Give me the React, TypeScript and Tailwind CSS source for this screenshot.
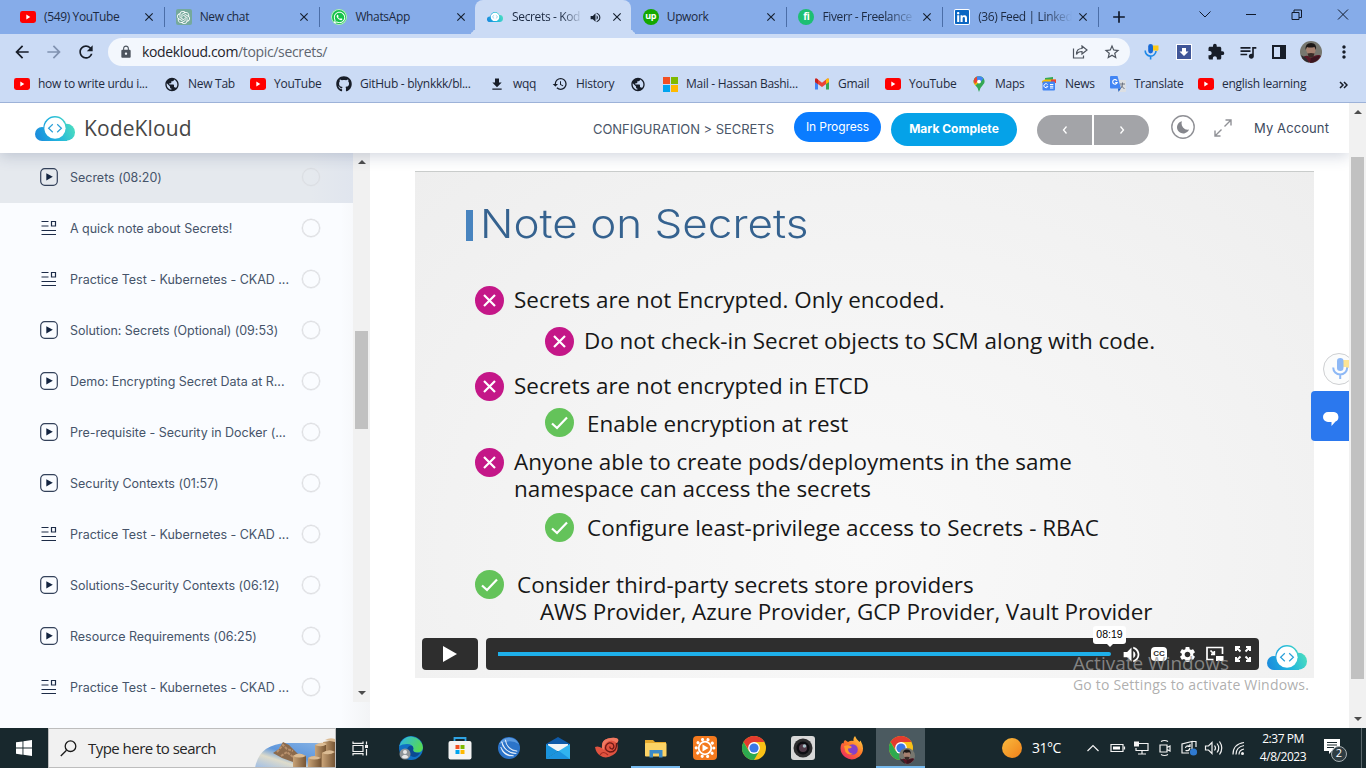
import React from "react";
import { FaYoutube, FaWhatsapp, FaGithub, FaLinkedin } from "react-icons/fa";
import { SiOpenai } from "react-icons/si";
import {
  MdArrowBack, MdArrowForward, MdRefresh, MdLock, MdStarBorder, MdExtension, MdQueueMusic, MdMoreVert,
  MdPublic, MdHistory, MdClose, MdVolumeUp, MdSettings, MdAdd, MdFileDownload,
} from "react-icons/md";

const ui = "font-['Open_Sans','Noto_Sans',sans-serif]";

function Cloud({ className, id }: { className: string; id: string }) {
  return (
    <svg viewBox="0 0 40 25" className={className}>
      <defs>
        <linearGradient id={id} gradientUnits="userSpaceOnUse" x1="0" y1="25" x2="40" y2="8">
          <stop offset="0" stopColor="#1b86dc" />
          <stop offset="0.5" stopColor="#20b4de" />
          <stop offset="1" stopColor="#4fe0bd" />
        </linearGradient>
      </defs>
      <g fill={`url(#${id})`}>
        <circle cx="20" cy="11.800" r="11.700" />
        <circle cx="7" cy="18" r="7" />
        <circle cx="31.500" cy="16.200" r="8.500" />
        <rect x="7" y="14" width="25" height="11" />
      </g>
      <circle cx="20" cy="12.200" r="10.600" fill="#fff" />
      <path d="M17.800 8.200L13.600 12.200L17.800 16.200M22.200 8.200L26.400 12.200L22.200 16.200" fill="none" stroke="#2a9fd8" strokeWidth="1.200" />
    </svg>
  );
}

function YT() {
  return (
    <svg viewBox="0 0 16 12" className="h-3 w-4">
      <rect width="16" height="12" rx="2.4" fill="#f00" />
      <path d="M6.3 3.6V8.4L10.3 6Z" fill="#fff" />
    </svg>
  );
}

function Face({ className }: { className: string }) {
  return (
    <svg viewBox="0 0 22 22" className={className}>
      <circle cx="11" cy="11" r="11" fill="#77776f" />
      <path d="M2 17Q5 14 8 15L14 15Q19 13 21 15A11 11 0 0 1 3 18Z" fill="#5a1826" />
      <path d="M6 9Q6 3 11 3Q16 3 15.500 10L13.500 15Q11 18 8.500 15Z" fill="#a5806f" />
      <path d="M5.500 9Q5 2 11 2Q17 2 16 9L14.500 6Q10 7 7 6Z" fill="#1c1817" />
      <path d="M7.500 12.500Q11 11.500 14.500 12.500L13.500 15.500Q11 18 8.500 15.500Z" fill="#3a2b27" />
      <path d="M1 14L6 17L9 21.500A11 11 0 0 1 1 14Z" fill="#2a2c30" />
      <path d="M11 17L20 14.500A11 11 0 0 1 10 22Z" fill="#3b1620" />
    </svg>
  );
}

function Mic() {
  return (
    <svg viewBox="0 0 16 16" className="size-4">
      <path d="M8 1.500H14.500V6L12.500 7.500V6.500H8Z" fill="#fbc918" />
      <rect x="4.200" y="0" width="4.800" height="9.500" rx="2.400" fill="#1668d6" />
      <path d="M1.200 6.500A5.400 5.400 0 0 0 12 7M6.600 12V15.500" fill="none" stroke="#1c88e8" strokeWidth="1.600" />
    </svg>
  );
}

type TabDef = { icon: React.ReactNode; text: string; sep?: boolean; active?: boolean; fade?: boolean };

const tabs: TabDef[] = [
  { icon: <YT />, text: "(549) YouTube", sep: true },
  { icon: <span className="flex size-4 items-center justify-center rounded-[2px] bg-[#75a99c] text-white"><SiOpenai size={13} /></span>, text: "New chat", sep: true },
  { icon: <span className="flex size-4 items-center justify-center rounded-full bg-[#16c24a] text-white ring-1 ring-white/70 ring-inset"><FaWhatsapp size={13} /></span>, text: "WhatsApp" },
  { icon: <Cloud id="tabcloud" className="h-[10px] w-4" />, text: "Secrets - Kod", active: true, fade: true },
  { icon: <span className="flex size-4 items-center justify-center rounded-full bg-[#14a800] pb-[2px] text-[9px] font-bold tracking-tight text-white">up</span>, text: "Upwork", sep: true },
  { icon: <span className="flex size-4 items-center justify-center rounded-full bg-[#1dbf73] pb-px text-[10px] font-bold tracking-tight text-white">fi</span>, text: "Fiverr - Freelance", sep: true, fade: true },
  { icon: <FaLinkedin size={16} color="#0a66c2" className="rounded-xs bg-white" />, text: "(36) Feed | Linked", sep: true, fade: true },
];

function Tab({ t }: { t: TabDef }) {
  const base = "relative flex h-[34px] w-[155.700px] shrink-0 items-center pl-3 pr-2 ";
  return (
    <div className={base + (t.active ? "rounded-t-lg bg-[#cbdbf5]" : "")}>
      {t.active && (
        <>
          <span className="absolute bottom-0 -left-2 size-2 rounded-br-lg shadow-[4px_4px_0_0_#cbdbf5] [clip-path:inset(0)]" />
          <span className="absolute -right-2 bottom-0 size-2 rounded-bl-lg shadow-[-4px_4px_0_0_#cbdbf5] [clip-path:inset(0)]" />
        </>
      )}
      <span className="flex w-4 shrink-0 justify-center">{t.icon}</span>
      <span
        className={
          "min-w-0 flex-1 overflow-hidden text-xs tracking-[-0.36px] whitespace-nowrap text-[#1c2a42] " +
          (t.active ? "ml-[9px] " : "ml-2 ") +
          (t.fade ? "[mask-image:linear-gradient(to_right,black_70%,transparent)]" : "")
        }
      >
        {t.text}
      </span>
      {t.active && <MdVolumeUp size={13} className="mr-2 ml-[6px] shrink-0 text-[#16202f]" />}
      <MdClose size={14} className={"shrink-0 text-[#16202f] " + (t.active ? "mr-[-1px]" : "mr-[-1px] ml-1")} />
      {t.sep ? <span className="mr-[-9px] ml-[9px] h-5 w-px shrink-0 bg-[#4b6ea8]" /> : null}
    </div>
  );
}

function TabStrip() {
  return (
    <div className="flex h-[34px] bg-[#86ace9] pl-2">
      {tabs.map((t) => <Tab key={t.text} t={t} />)}
      <div className="flex w-[60px] items-center pl-[11px]"><MdAdd size={20} className="text-[#10182a]" /></div>
      <div className="ml-auto flex h-7 items-center">
        <svg viewBox="0 0 184 28" className="h-7 w-[184px]" fill="none" stroke="#111a2b" strokeWidth="1">
          <path d="M17.500 11.500L23 17L28.500 11.500M64 14.500H74M110 12.500H117V19.500H110ZM112 12V10H119.500V17.500H117M156 9.500L166 19.500M166 9.500L156 19.500" />
        </svg>
      </div>
    </div>
  );
}

function Toolbar() {
  return (
    <div className="flex h-[35px] items-center bg-[#cbdbf5] pt-px">
      <div className="flex w-[108px] items-center gap-3 pl-3">
        <MdArrowBack size={20} className="text-[#171d28]" />
        <MdArrowForward size={20} className="text-[#8092b0]" />
        <MdRefresh size={20} className="text-[#171d28]" />
      </div>
      <div className="flex h-7 w-[1022px] items-center rounded-full bg-[#f3f7fd] pl-[11px]">
        <MdLock size={14} className="text-[#4d545e]" />
        <span className="ml-[9px] flex-1 text-sm tracking-[-0.34px] text-[#5e656f]">
          <span className="text-[#1d232b]">kodekloud.com</span>/topic/secrets/
        </span>
        <svg viewBox="0 0 16 14" className="mr-[15px] h-[14px] w-4" fill="none" stroke="#4d545e" strokeWidth="1.200">
          <path d="M1.500 3.500V13H11.500V10.500M10 1L15 5L10 9V6.500Q6 6.500 4.500 9.500Q4.500 3.500 10 3.500Z" />
        </svg>
        <MdStarBorder size={18} className="mr-[9px] text-[#4d545e]" />
      </div>
      <div className="flex flex-1 items-center pl-[14px]">
        <Mic />
        <span className="ml-4 flex size-4 items-center justify-center border border-white bg-[#405698]">
          <svg viewBox="0 0 10 10" className="size-[10px]"><path d="M3 1H7V4.500H9.500L5 9L.5 4.500H3Z" fill="#fff" /></svg>
        </span>
        <MdExtension size={18} className="ml-[15px] text-[#171d28]" />
        <MdQueueMusic size={20} className="ml-[13px] text-[#171d28]" />
        <span className="ml-[14px] h-[14px] w-[14px] border-2 border-r-[6px] border-[#171d28]" />
        <Face className="ml-[14px] size-[22px]" />
        <MdMoreVert size={20} className="ml-[12px] text-[#171d28]" />
      </div>
    </div>
  );
}

function MsGrid({ className }: { className: string }) {
  return (
    <span className={"grid grid-cols-2 gap-px " + className}>
      <i className="bg-[#f25022]" /><i className="bg-[#7fba00]" /><i className="bg-[#00a4ef]" /><i className="bg-[#ffb900]" />
    </span>
  );
}

const gmail = (
  <svg viewBox="0 0 16 12" className="h-3 w-4">
    <path d="M1 2V11.500H4V5Z" fill="#4285f4" /><path d="M12 5V11.500H15V2Z" fill="#34a853" />
    <path d="M1 2Q1 0 3 .8L8 4.800L13 .8Q15 0 15 2V4L8 9L1 4Z" fill="#ea4335" />
    <path d="M12 1.600L13 .8Q15 0 15 2V4L12 6Z" fill="#fbbc04" />
    <path d="M1 4V2Q1 0 3 .8L4 1.600V6Z" fill="#c5221f" />
  </svg>
);
const maps = (
  <svg viewBox="0 0 12 16" className="h-4 w-3">
    <path d="M6 16Q5.500 12 2.500 9.500Q0 7 .5 5A5.600 5.600 0 0 1 11.600 5Q12 7.500 9.500 9.500Q6.700 12 6 16Z" fill="#34a853" />
    <path d="M2.500 9.500Q0 7 .6 5L3 2.500L6 6Z" fill="#fbbc04" /><path d="M.6 5A5.600 5.600 0 0 1 4 .6L7 3L2 8Z" fill="#ea4335" />
    <path d="M4 .6A5.600 5.600 0 0 1 10.500 2.500L7 7L4 3.500Z" fill="#4285f4" /><circle cx="6" cy="5.600" r="1.900" fill="#fff" />
  </svg>
);
const news = (
  <svg viewBox="0 0 16 14" className="h-[14px] w-4">
    <path d="M4 1L12 0V4H4Z" fill="#34a853" /><path d="M1 4L4 2.500H15L14 6H1Z" fill="#fbbc04" /><path d="M10 2.500H15V6H10Z" fill="#ea4335" />
    <rect x="1.500" y="4.500" width="12.500" height="9" rx="1" fill="#4285f4" />
    <path d="M6.600 7.600A2 2 0 1 0 6.800 9.400H5.300M9 7.500H12.300M9 9.300H12.300M9 11H12.300" fill="none" stroke="#fff" strokeWidth="1" />
  </svg>
);
const translate = (
  <svg viewBox="0 0 16 16" className="size-4">
    <path d="M6 4H15Q16 4 16 5V15Q16 16 15 16H8Z" fill="#dcdfe3" />
    <path d="M1 0H7.500L11 12.500H1Q0 12.500 0 11.500V1Q0 0 1 0Z" fill="#4285f4" />
    <path d="M7 4.700A2.300 2.300 0 1 0 7.200 6.600H5.200" fill="none" stroke="#fff" strokeWidth="1.100" />
    <path d="M10 8H15M12.500 6.500V8Q12.500 11 10.500 12.500M11 9.500L14.500 13" fill="none" stroke="#6b7280" />
    <path d="M8 12.500H11L8.500 16Z" fill="#1a5fc8" />
  </svg>
);
const dark = "text-[#171d28]";
const bookmarks: { icon: React.ReactNode; text: string; w: string }[] = [
  { icon: <YT />, text: "how to write urdu i...", w: "w-[150px]" },
  { icon: <MdPublic size={17} className={dark} />, text: "New Tab", w: "w-[86px]" },
  { icon: <YT />, text: "YouTube", w: "w-[86px]" },
  { icon: <FaGithub size={16} className={dark} />, text: "GitHub - blynkkk/bl...", w: "w-[153px]" },
  { icon: <MdFileDownload size={17} className={dark} />, text: "wqq", w: "w-[63px]" },
  { icon: <MdHistory size={16} className={dark} />, text: "History", w: "w-[78px]" },
  { icon: <MdPublic size={17} className={dark} />, text: "", w: "w-[32px]" },
  { icon: <MsGrid className="size-[15px]" />, text: "Mail - Hassan Bashi...", w: "w-[152px]" },
  { icon: gmail, text: "Gmail", w: "w-[71px]" },
  { icon: <YT />, text: "YouTube", w: "w-[86px]" },
  { icon: maps, text: "Maps", w: "w-[70px]" },
  { icon: news, text: "News", w: "w-[69px]" },
  { icon: translate, text: "Translate", w: "w-[88px]" },
  { icon: <YT />, text: "english learning", w: "w-[138px]" },
];

function Bookmarks() {
  return (
    <div className="flex h-[34px] items-center border-b border-[#9db2d8] bg-[#cbdbf5] pb-[3px] pl-[14px] text-xs tracking-[-0.27px] text-[#1f2b3f]">
      {bookmarks.map((b, i) => (
        <div key={i} className={"flex shrink-0 items-center gap-2 whitespace-nowrap " + b.w}>
          <span className="flex w-4 shrink-0 justify-center">{b.icon}</span>
          {b.text}
        </div>
      ))}
      <svg viewBox="0 0 9 8" className="mt-px ml-[3px] h-2 w-[9px]" fill="none" stroke="#171d28" strokeWidth="1.500">
        <path d="M1 1L4 4L1 7M5 1L8 4L5 7" />
      </svg>
    </div>
  );
}

function Header() {
  return (
    <header className="relative z-10 flex h-[50px] w-[1349px] items-center bg-white pl-[35px] font-['Inter',sans-serif] shadow-[0_3px_14px_rgba(45,62,105,0.22)] [clip-path:inset(0_0_-24px_0)]">
      <Cloud id="headcloud" className="h-[25px] w-10" />
      <span className="ml-[9px] pt-[2px] text-[21px] tracking-[0.120px] text-[#464646] font-['Open_Sans',sans-serif]">KodeKloud</span>
      <div className="ml-auto flex items-center pr-[19px]">
        <span className="w-[201px] pt-1 text-[13px] tracking-[-0.050px] text-[#4a5668]">CONFIGURATION &gt; SECRETS</span>
        <span className="mb-[2px] flex h-[30px] w-[87px] items-center justify-center rounded-full bg-[#0a7cff] text-xs tracking-[-0.100px] text-white">In Progress</span>
        <span className="mt-[3px] ml-[10px] flex h-[33px] w-[126px] items-center justify-center rounded-full bg-[#05a2e8] pb-px text-xs font-bold text-white">Mark Complete</span>
        <div className="mt-1 ml-5 flex gap-[2px]">
          <span className="flex h-[30px] w-[55px] items-center justify-center rounded-l-full bg-[#a3a4a8]">
            <svg viewBox="0 0 6 8" className="h-2 w-[6px]" fill="none" stroke="#fff" strokeWidth="1.300"><path d="M4.500 .5L1.500 4L4.500 7.500" /></svg>
          </span>
          <span className="flex h-[30px] w-[55px] items-center justify-center rounded-r-full bg-[#a3a4a8]">
            <svg viewBox="0 0 6 8" className="h-2 w-[6px]" fill="none" stroke="#fff" strokeWidth="1.300"><path d="M1.500 .5L4.500 4L1.500 7.500" /></svg>
          </span>
        </div>
        <svg viewBox="0 0 24 24" className="mb-[2px] ml-[22px] size-6">
          <circle cx="12" cy="12" r="11.200" fill="none" stroke="#909196" strokeWidth="1.400" />
          <path d="M11 6.200A6.200 6.200 0 1 0 18 14.500A6.200 6.200 0 0 1 11 6.200Z" fill="#85868c" />
        </svg>
        <svg viewBox="0 0 18 18" className="mb-px ml-[19px] size-[18px]" fill="none" stroke="#909196" strokeWidth="1.400">
          <path d="M11.500 1H17V6.500M17 1L10.500 7.500M6.500 17H1V11.500M1 17L7.500 10.500" />
        </svg>
        <span className="ml-[22px] w-[76px] pt-[2px] text-[13px] tracking-[0.100px] whitespace-nowrap text-[#3d4a5e]">My Account</span>
      </div>
    </header>
  );
}

const lessons: [string, "play" | "note"][] = [
  ["Secrets (08:20)", "play"],
  ["A quick note about Secrets!", "note"],
  ["Practice Test - Kubernetes - CKAD ...", "note"],
  ["Solution: Secrets (Optional) (09:53)", "play"],
  ["Demo: Encrypting Secret Data at R...", "play"],
  ["Pre-requisite - Security in Docker (...", "play"],
  ["Security Contexts (01:57)", "play"],
  ["Practice Test - Kubernetes - CKAD ...", "note"],
  ["Solutions-Security Contexts (06:12)", "play"],
  ["Resource Requirements (06:25)", "play"],
  ["Practice Test - Kubernetes - CKAD ...", "note"],
];

function Arrow({ up }: { up?: boolean }) {
  return (
    <svg viewBox="0 0 8 4" className="h-1 w-2"><path d={up ? "M0 4L4 0L8 4Z" : "M0 0L4 4L8 0Z"} fill="#4d4d4d" /></svg>
  );
}

function Sidebar() {
  return (
    <aside className="flex w-[370px] shrink-0 bg-[linear-gradient(to_right,#fafcff_0,#fafcff_92%,#f3f4f6_100%)]">
      <div className="flex w-[353px] flex-col">
        {lessons.map(([text, kind], i) => (
          <div
            key={i}
            className={
              "flex shrink-0 items-center pl-10 " +
              (i === 0 ? "h-[50px] bg-[linear-gradient(to_right,#e5e9ee_88%,#e0e5ee)] pb-[2px]" : "h-[51px] pb-[1px]")
            }
          >
            {kind === "play" ? (
              <svg viewBox="0 0 18 18" className="size-[18px]">
                <rect x=".7" y=".7" width="16.600" height="16.600" rx="4" fill="none" stroke="#33415a" strokeWidth="1.200" />
                <path d="M6.300 5.200V12.400L12.800 8.800Z" fill="#12233f" />
              </svg>
            ) : (
              <svg viewBox="0 0 18 18" className="size-[18px]" fill="none" stroke="#1c2b47" strokeWidth="1.200">
                <path d="M1.500 2.500H8.500M1.500 7H8.500M1.500 11.500H16M1.500 15.500H16M11.500 2.500H15.500V7H11.500Z" />
              </svg>
            )}
            <span className="ml-3 w-[232px] pt-[3px] text-[12.500px] tracking-[-0.020px] whitespace-nowrap text-[#46546a] font-['Inter',sans-serif]">{text}</span>
            <span className={"size-[18px] rounded-full border-[1.500px] shadow-[0_0_0_0.500px_#e2e4e8] " + (i === 0 ? "border-[#dadde2]" : "border-[#dcdde0]")} />
          </div>
        ))}
      </div>
      <div className="flex h-[549px] w-[17px] flex-col items-center bg-[#f1f1f1] pt-[7px] pb-[7px]">
        <Arrow up />
        <div className="mt-[167px] h-[98px] w-[13px] bg-[#c1c1c1]" />
        <div className="mt-auto flex"><Arrow /></div>
      </div>
    </aside>
  );
}

type Point = { ok: boolean; lines: string[]; cls: string; gap: string };
const points: Point[] = [
  { ok: false, lines: ["Secrets are not Encrypted. Only encoded."], cls: "", gap: "ml-[10px]" },
  { ok: false, lines: ["Do not check-in Secret objects to SCM along with code."], cls: "ml-[70px] mt-3", gap: "ml-[10px]" },
  { ok: false, lines: ["Secrets are not encrypted in ETCD"], cls: "mt-4", gap: "ml-[10px]" },
  { ok: true, lines: ["Enable encryption at rest"], cls: "ml-[70px] mt-[7px]", gap: "ml-[13px] pt-[2px]" },
  { ok: false, lines: ["Anyone able to create pods/deployments in the same", "namespace can access the secrets"], cls: "mt-[11px]", gap: "ml-[10px]" },
  { ok: true, lines: ["Configure least-privilege access to Secrets - RBAC"], cls: "ml-[70px] mt-[11px]", gap: "ml-[13px] pt-px" },
  { ok: true, lines: ["Consider third-party secrets store providers", "AWS Provider, Azure Provider, GCP Provider, Vault Provider"], cls: "mt-7", gap: "ml-[13px] pt-px" },
];

function Slide() {
  return (
    <div className="flex h-[507px] w-[899px] flex-col overflow-hidden border-t border-[#c9cccb] bg-[radial-gradient(ellipse_at_50%_75%,#f9f9f9_0%,#f5f5f5_40%,#eeeeee_100%)]">
      <div className="flex h-[72px] items-center pt-[32px] pl-[51px]">
        <span className="mt-[3px] h-[31px] w-[7px] bg-[#4884bf]" />
        <span className="ml-[7px] origin-left scale-x-[1.1] text-[40px] leading-[48px] font-light whitespace-nowrap text-[#35628f] font-['Inter',sans-serif]">Note on Secrets</span>
      </div>
      <div className="mt-[42px] flex flex-col pl-[60px]">
        {points.map((p, i) => (
          <div key={i} className={"flex items-start " + p.cls}>
            <svg viewBox="0 0 29 29" className="size-[29px] shrink-0" fill="none" stroke="#fff" strokeWidth="2.200">
              <circle cx="14.500" cy="14.500" r="14.500" stroke="none" fill={p.ok ? "#64c35a" : "#c41788"} />
              <path d={p.ok ? "M7 15.500L12 20L22 9.500" : "M9 9L20 20M20 9L9 20"} />
            </svg>
            <div className={"text-[22.450px] leading-[27px] whitespace-nowrap text-[#171717] font-['Open_Sans',sans-serif] " + p.gap}>
              {p.lines.map((line, n) => (
                <div key={n} className={i === 6 && n === 1 ? "pl-[23px] tracking-[-0.08px]" : ""}>{line}</div>
              ))}
            </div>
          </div>
        ))}
      </div>
      <div className="mt-auto flex h-10 gap-2 pb-2 pl-[7px]">
        <div className="flex w-14 items-center justify-center rounded bg-[#2e2e2e]">
          <svg viewBox="0 0 14 16" className="h-4 w-[14px]"><path d="M0 0L14 8L0 16Z" fill="#fff" /></svg>
        </div>
        <div className="flex w-[773px] items-center rounded bg-[#2e2e2e] pl-3 text-white">
          <div className="relative h-1 w-[613px] rounded-r-sm bg-[#1eb0ea]">
            <div className="absolute right-[-15px] bottom-[12px] flex h-[18px] w-[33px] items-center justify-center rounded-[3px] bg-white text-[10.500px] text-black font-['Liberation_Sans',sans-serif]">
              08:19
              <svg viewBox="0 0 8 4" className="absolute -bottom-[3px] h-1 w-2"><path d="M0 0H8L4 4Z" fill="#fff" /></svg>
            </div>
          </div>
          <div className="ml-[6px] flex">
            <span className="flex w-7 justify-center"><MdVolumeUp size={21} /></span>
            <span className="flex w-7 items-center justify-center">
              <span className="flex h-[14px] w-4 items-center justify-center rounded-sm bg-white text-[8px] font-bold text-[#2e2e2e] font-['Liberation_Sans',sans-serif]">CC</span>
            </span>
            <span className="flex w-7 items-center justify-center"><MdSettings size={19} /></span>
            <svg viewBox="0 0 28 16" className="mt-[2px] h-4 w-7" fill="none" stroke="#fff" strokeWidth="1.700">
              <path d="M12.500 13.500H6V1.500H21.500V8M9.500 4.500L13 8M13.300 5V8.300H10" /><rect x="15" y="10" width="7.500" height="5" fill="#fff" stroke="none" />
            </svg>
            <svg viewBox="0 0 28 16" className="mt-[2px] h-4 w-7" fill="none" stroke="#fff" strokeWidth="2">
              <path d="M7 5V1H11M17 1H21V5M21 11V15H17M11 15H7V11M7.500 1.500L11.500 5.500M20.500 1.500L16.500 5.500M20.500 14.500L16.500 10.500M7.500 14.500L11.500 10.500" />
            </svg>
          </div>
        </div>
        <Cloud id="vidcloud" className="mt-[7px] h-[25px] w-10" />
      </div>
    </div>
  );
}

function Watermark() {
  return (
    <div className={"pointer-events-none absolute top-[652px] left-[1073px] z-20 whitespace-nowrap text-[#9a9a9a]/80 " + ui}>
      <div className="text-[19px] leading-[22px]">Activate Windows</div>
      <div className="text-sm leading-[22px] tracking-[0.190px]">Go to Settings to activate Windows.</div>
    </div>
  );
}

function Page() {
  return (
    <div className="flex h-[625px]">
      <div className="relative flex w-[1349px] flex-col overflow-hidden bg-white">
        <Header />
        <div className="flex min-h-0 flex-1 overflow-hidden">
          <Sidebar />
          <main className="flex-1 bg-white pt-[18px] pl-[45px]"><Slide /></main>
        </div>
        <div className="absolute top-[250px] left-[1323px] flex size-8 items-center rounded-full border border-[#b9bbbe] bg-[#fafbfc] pl-2 opacity-70">
          <svg viewBox="0 0 20 22" className="h-[22px] w-5 shrink-0">
            <path d="M8 2H18V9L14 11V9H8Z" fill="#fbd968" /><rect x="5" y="0" width="6.500" height="13" rx="3.200" fill="#5d9bf2" />
            <path d="M1.200 9.500A7 7 0 0 0 15.200 9.500M8.200 17V21" fill="none" stroke="#5d9bf2" strokeWidth="2" />
          </svg>
        </div>
        <div className="absolute top-[288px] left-[1311px] flex h-[50px] w-[38px] items-center justify-center rounded-l bg-[#2b78ee] pt-[6px] pl-px">
          <svg viewBox="0 0 16 14" className="h-[14px] w-4"><path d="M5 0H11A5 5 0 0 1 12.500 9.500L8.500 14V10H5A5 5 0 0 1 5 0Z" fill="#fff" /></svg>
        </div>
      </div>
      <div className="flex w-[17px] flex-col items-center bg-[#f1f1f1] pt-[7px] pb-[7px]">
        <Arrow up />
        <div className="mt-[43px] h-[522px] w-[13px] bg-[#c1c1c1]" />
        <div className="mt-auto flex"><Arrow /></div>
      </div>
    </div>
  );
}

function Chrome() {
  return (
    <svg viewBox="0 0 24 24" className="size-6">
      <circle cx="12" cy="12" r="12" fill="#fbc116" />
      <path d="M1.600 6A12 12 0 0 1 22.400 6H12L8 16Z" fill="#e33b2e" />
      <path d="M1.600 6L6.800 15L12 18L17.200 15L12 24A12 12 0 0 1 1.600 6Z" fill="#2da94f" />
      <circle cx="12" cy="12" r="5.900" fill="#fff" /><circle cx="12" cy="12" r="4.600" fill="#3b78e7" />
    </svg>
  );
}

const apps: React.ReactNode[] = [
  <svg viewBox="0 0 24 24" className="size-6">
    <defs><linearGradient id="edge" x1="0" y1="0" x2="1" y2=".4"><stop offset="0" stopColor="#2bb5ee" /><stop offset="1" stopColor="#55d858" /></linearGradient></defs>
    <circle cx="12" cy="12" r="12" fill="#1170c4" /><path d="M.3 10A12 12 0 0 1 24 12Q23 17 17 16.500Q13 16 14.500 13Q14 8 8 8Q3 8 .3 10Z" fill="url(#edge)" />
    <path d="M8 14Q9 9 13.500 10Q15 12 14 14Q14 17 21 17Q17 23 12 20Q8 18 8 14Z" fill="#0b4a92" />
    <circle cx="6" cy="18" r="5.500" fill="#8e9498" /><circle cx="6" cy="16" r="2" fill="#e8e8e8" /><path d="M2.500 21Q6 16.500 9.500 21Q6 24 2.500 21Z" fill="#e8e8e8" />
  </svg>,
  <svg viewBox="0 0 24 24" className="size-6">
    <path d="M6.500 6V2H17.500V6" fill="none" stroke="#2fa4e4" strokeWidth="1.800" /><rect x=".5" y="5" width="23" height="18.500" rx="2" fill="#f4f4f4" />
    <path d="M7.500 9H11.500V13H7.500Z" fill="#f25022" /><path d="M12.500 9H16.500V13H12.500Z" fill="#7fba00" /><path d="M7.500 14H11.500V18H7.500Z" fill="#00a4ef" /><path d="M12.500 14H16.500V18H12.500Z" fill="#ffb900" />
  </svg>,
  <svg viewBox="0 0 24 24" className="size-[22px]">
    <circle cx="12" cy="12" r="12" fill="#2c74c9" /><path d="M1 8A12 12 0 0 1 23 8Q14 1 1 8Z" fill="#5b9ae0" />
    <path d="M4 5Q5 16 20 18Q9 19 4 5ZM8 3Q9 13 21 15.500Q10 15 8 3ZM3 11Q7 20 17 20.500Q6 22 3 11Z" fill="#fff" stroke="#fff" strokeWidth=".6" />
  </svg>,
  <svg viewBox="0 0 24 24" className="size-6">
    <path d="M0 8L12 1L24 8V12H0Z" fill="#0f5aa8" /><path d="M2 8H22V15H2Z" fill="#f1f4f6" /><path d="M0 8L12 15.500L0 23Z" fill="#1a93dc" /><path d="M0 23L24 8V23Z" fill="#31b4ef" /><path d="M0 23L13 15L24 23Z" fill="#1c93de" />
  </svg>,
  <svg viewBox="0 0 24 24" className="size-6">
    <path d="M0 11Q3 9.500 7 12Q6 4 13 2.500Q20 1 23 3Q24 5 22 7Q24.500 15 18 19Q11 23.500 5 19.500Q1 17 0 11Z" fill="#e05340" />
    <path d="M7 12Q6 4 13 2.500Q20 1 23 3Q24 5 22 7Q16 2 11 7Q9 9 9 14Z" fill="#f07a62" />
    <path d="M21.500 7Q22 16 15 16Q9 14.500 11 9.500Q14 5 18 8Q20 11 17.500 13Q14.500 13 15 10.500" fill="none" stroke="#6b1714" strokeWidth="1.300" />
    <path d="M5 19Q8 14 13 19" fill="none" stroke="#a32a20" strokeWidth="1.200" />
  </svg>,
  <svg viewBox="0 0 24 24" className="size-6">
    <path d="M1 4H9L11 6H22V20H1Z" fill="#e5a92c" /><rect x="1" y="7" width="21.500" height="13.500" rx="1" fill="#fcd365" /><path d="M5.500 21.500V14H18.500V21.500H15V17.500H9V21.500Z" fill="#3b8ac8" />
  </svg>,
  <svg viewBox="0 0 24 24" className="size-6">
    <rect width="24" height="24" rx="4" fill="#f47a1e" />
    <circle cx="12" cy="12" r="8.800" fill="none" stroke="#fff" strokeWidth="3.200" strokeDasharray="0.010 5.520" strokeLinecap="round" />
    <circle cx="12" cy="12" r="6.300" fill="none" stroke="#fff" strokeWidth="1.800" /><path d="M9.500 8.500L15.500 12L9.500 15.500Z" fill="#fff" />
  </svg>,
  <Chrome />,
  <svg viewBox="0 0 24 24" className="size-6">
    <rect width="24" height="24" rx="3" fill="#d8d8d8" /><circle cx="12" cy="12" r="9.500" fill="#2c2c2e" /><circle cx="12" cy="12" r="6.500" fill="#0d0d12" /><circle cx="12" cy="12" r="4" fill="#503a48" /><circle cx="13.500" cy="10" r="1.800" fill="#a7c0c8" />
  </svg>,
  <svg viewBox="0 0 24 24" className="size-6">
    <defs><linearGradient id="fox" x1="1" y1="0" x2="0.2" y2="1"><stop offset="0" stopColor="#ffe14a" /><stop offset=".5" stopColor="#ff7a27" /><stop offset="1" stopColor="#ee2a62" /></linearGradient></defs>
    <path d="M5 4L8 6Q11 4 13.500 5Q13 2 15 0Q16 3 19.500 6L20.500 4.500Q26 14 19.500 20.500Q12 26 5 21Q-1 16 1 9Q2 6 3.500 7.500Q3.500 5 5 4Z" fill="url(#fox)" />
    <circle cx="12.500" cy="13.500" r="5.300" fill="#8440c9" /><path d="M4 10Q9 8 12 11Q10 13 8 12.500Q8 17 13 18Q8 19.500 5.500 16Z" fill="#ff9a2c" />
  </svg>,
];

function SearchArt() {
  return (
    <svg viewBox="0 0 80 38" className="h-[38px] w-20">
      <defs>
        <linearGradient id="sea" x1="0" y1="1" x2="1" y2="0"><stop offset="0" stopColor="#9dbde8" /><stop offset=".3" stopColor="#dfdccb" /><stop offset=".5" stopColor="#5f97dc" /><stop offset="1" stopColor="#8db7e6" /></linearGradient>
        <linearGradient id="rock" x1="0" x2="1"><stop offset="0" stopColor="#c9a377" /><stop offset="1" stopColor="#765534" /></linearGradient>
      </defs>
      <path d="M0 39Q4 15 32 14H80V39Z" fill="url(#sea)" />
      <path d="M18 24L24 20L28 13L34 16L42 24L46 28L38 33L27 29Z" fill="#8c6a4c" />
      <path d="M22 23L28 16L32 20L38 22M26 27L32 23L38 28" fill="none" stroke="#b8906c" strokeWidth="2" strokeDasharray="3 1" />
      <g fill="url(#rock)">
        <path d="M68 13L80 11V39H68Z" /><path d="M60 16L71 16V39H60Z" /><path d="M38 27Q44 23 51 27V39H38Z" /><path d="M53 29Q59 25 66 29V39H53Z" /><path d="M67 24Q74 20 80 23V39H67Z" />
      </g>
      <path d="M38 27Q44 22 51 27Q44 30 38 27ZM53 29Q59 25 66 29Q59 32 53 29ZM67 24Q74 19 80 23Q74 27 67 24ZM60 16Q66 12 72 15Q67 19 60 16ZM70 11Q75 8 80 10V13Z" fill="#dcbc94" />
    </svg>
  );
}

function Taskbar() {
  return (
    <div className={"flex h-10 items-stretch bg-[#18282d] text-white " + ui}>
      <div className="flex w-12 items-center justify-center">
        <svg viewBox="0 0 16 16" className="size-4" fill="#fff"><path d="M0 2.300L6.500 1.400V7.600H0ZM7.400 1.300L16 0V7.600H7.400ZM0 8.500H6.500V14.700L0 13.800ZM7.400 8.500H16V16L7.400 14.800Z" /></svg>
      </div>
      <div className="flex w-72 items-center border border-[#bdbdbd] bg-[#f1f1f1]">
        <svg viewBox="0 0 17 17" className="ml-[11px] size-[17px]" fill="none" stroke="#1a1a1a" strokeWidth="1.300"><circle cx="10.500" cy="6.200" r="5.300" /><path d="M6.500 10.200L.8 16" /></svg>
        <span className="ml-[11px] flex-1 text-[15px] tracking-[-0.530px] text-[#262626]">Type here to search</span>
        <SearchArt />
      </div>
      <div className="flex w-[50px] items-center justify-center pr-[2px]">
        <svg viewBox="0 0 17 16" className="size-[17px]" fill="none" stroke="#f0f0f0" strokeWidth="1.200"><path d="M1 1V2.800H11V1M1 15V13.200H11V15M1 5H11V11H1ZM14.500 1V4M14.500 8.500V15" /><path d="M13 4.500H16V7.500H13Z" fill="#f0f0f0" stroke="none" /></svg>
      </div>
      {apps.map((a, i) => (
        <div key={i} className={"relative flex w-[49px] items-center justify-center " + (i === 5 ? "border-b-2 border-[#76b9ed] pt-[2px]" : "")}>{a}</div>
      ))}
      <div className="flex w-[49px] items-center justify-center border-b-2 border-[#76b9ed] bg-[#4b5a60] pt-[2px]">
        <div className="relative"><Chrome /><Face className="absolute -right-[2px] -bottom-1 size-4" /></div>
      </div>
      <div className="ml-auto flex items-center">
        <span className="size-5 rounded-full bg-[linear-gradient(135deg,#f9bb3f,#f08019)]" />
        <span className="ml-[10px] w-[54px] text-sm tracking-[-0.460px]">31°C</span>
        <svg viewBox="0 0 160 20" className="h-5 w-40" fill="none" stroke="#f2f2f2" strokeWidth="1.200">
          <path d="M1.500 13L7 7.500L12.500 13" />
          <path d="M25 6.500H37V13.500H25ZM38.500 8.500V11.500" /><path d="M27 8.500H34V11.500H27Z" fill="#fff" stroke="none" />
          <path d="M53 5.500H62V12.500H50V10M56 12.500V16M52 16H60" /><path d="M48 3.500H53V8.500H48Z" fill="#f2f2f2" stroke="none" />
          <path d="M74 7H81V14H74ZM81 9.500L84 8V13L81 11.500M75 3.500Q78.500 1.500 82 3.500M75 16.500Q78.500 18.500 82 16.500" />
          <path d="M106 11V3.500L96 6V15H103M99.500 10Q100 7 104 8M104 10Q103 13.500 99.500 12.500M104 6V8.500H101.500" />
          <path d="M106 3.500H110V9" />
          <circle cx="107.500" cy="14" r="3.600" fill="#2f7ad1" stroke="none" />
          <path d="M119.500 8H122.500L126 4.500V15.500L122.500 12H119.500ZM128.500 7.500Q130.500 10 128.500 12.500M131 5.500Q134.500 10 131 14.500M133.500 3.500Q138 10 133.500 16.500" />
          <path d="M147 16.500Q147 6 158 4.500M150 16.500Q150 9 158 7.500M153 16.500Q153 12 158 11" /><circle cx="156.500" cy="15.500" r="1.500" fill="#f2f2f2" stroke="none" />
        </svg>
        <div className="w-[72px] pl-[2px] text-center text-xs leading-[18px] tracking-[-0.450px]"><div>2:37 PM</div><div>4/8/2023</div></div>
        <div className="relative ml-[6px] flex w-[37px] justify-start">
          <svg viewBox="0 0 16 16" className="mb-[3px] size-4"><path d="M0 0H16V12H8L5 15V12H0Z" fill="#fff" /><path d="M3 3.500H13M3 6H13M3 8.500H10" stroke="#18282d" /></svg>
          <span className="absolute top-[7px] left-[7px] flex size-4 items-center justify-center rounded-full border border-[#a8b0b3] bg-[#2f3d43] text-[11px]">2</span>
        </div>
        <span className="h-10 w-[5px] border-l border-[#59666b]" />
      </div>
    </div>
  );
}

export default function App() {
  return (
    <div className={"relative flex h-[768px] w-[1366px] flex-col overflow-hidden " + ui}>
      <TabStrip />
      <Toolbar />
      <Bookmarks />
      <Page />
      <Watermark />
      <Taskbar />
    </div>
  );
}
